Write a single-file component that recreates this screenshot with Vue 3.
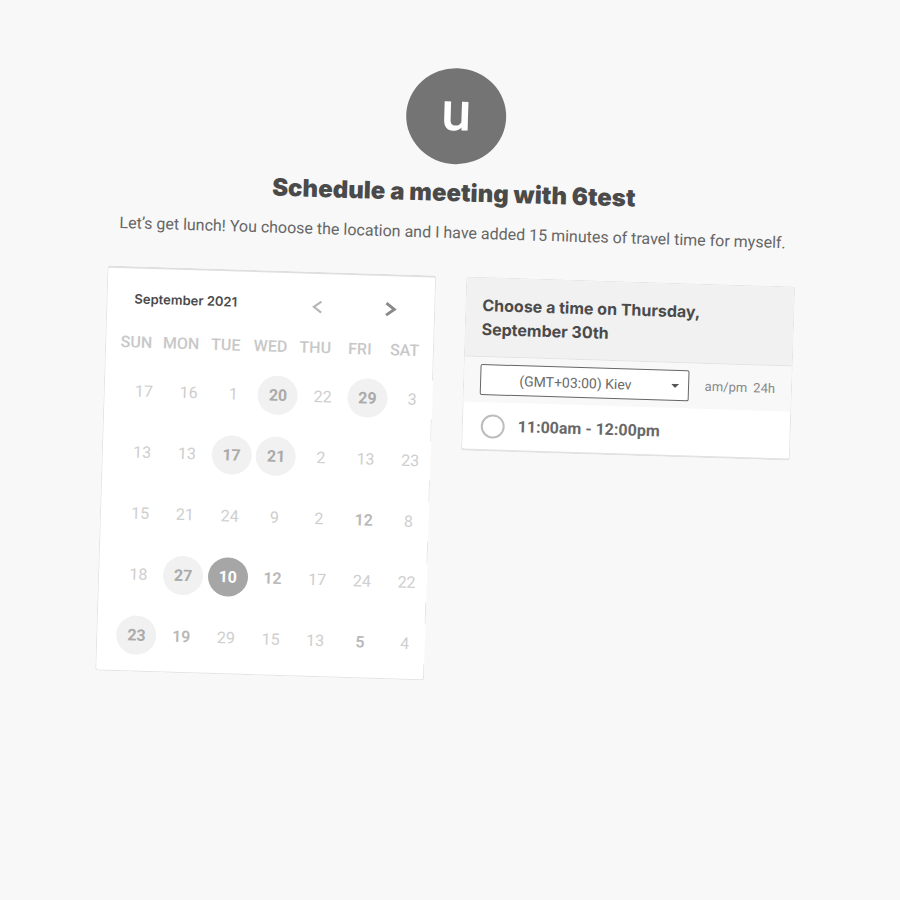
<script setup>
import { ref } from 'vue'

const weekdays = ['SUN', 'MON', 'TUE', 'WED', 'THU', 'FRI', 'SAT']

// state: '' = unavailable, 'strong' = emphasised, 'open' = available, 'selected' = chosen
const weeks = [
  [[17], [16], [1], [20, 'open'], [22], [29, 'open'], [3]],
  [[13], [13], [17, 'open'], [21, 'open'], [2], [13], [23]],
  [[15], [21], [24], [9], [2], [12, 'strong'], [8]],
  [[18], [27, 'open'], [10, 'selected'], [12, 'strong'], [17], [24], [22]],
  [[23, 'open'], [19, 'strong'], [29], [15], [13], [5, 'strong'], [4]],
]

const timezone = ref('kiev')
const slot = ref('')
</script>

<template>
  <main class="page">
    <div class="scheduler">
      <header class="intro">
        <div class="avatar">u</div>
        <h1>Schedule a meeting with 6test</h1>
        <p>Let’s get lunch! You choose the location and I have added 15 minutes of travel time for myself.</p>
      </header>

      <div class="panels">
        <section class="card calendar">
          <div class="month">
            <h2>September 2021</h2>
            <button type="button" class="nav" aria-label="Previous month">
              <svg width="16" height="16" viewBox="0 0 16 16"><path d="M12 2.5 4.5 8l7.5 5.5" /></svg>
            </button>
            <button type="button" class="nav next" aria-label="Next month">
              <svg width="16" height="16" viewBox="0 0 16 16"><path d="M4 2 12 8l-8 6" /></svg>
            </button>
          </div>
          <table>
            <thead>
              <tr>
                <th v-for="d in weekdays" :key="d" scope="col"><span>{{ d }}</span></th>
              </tr>
            </thead>
            <tbody>
              <tr v-for="(week, w) in weeks" :key="w">
                <td v-for="([day, state], i) in week" :key="i">
                  <button type="button" class="day" :class="state">{{ day }}</button>
                </td>
              </tr>
            </tbody>
          </table>
        </section>

        <section class="card times">
          <h2>Choose a time on Thursday, September 30th</h2>
          <div class="zone">
            <div class="picker">
              <select v-model="timezone" aria-label="Time zone">
                <option value="kiev">(GMT+03:00) Kiev</option>
              </select>
              <svg class="caret" width="8" height="4" viewBox="0 0 8 4"><path d="M0 0h8L4 4z" /></svg>
            </div>
            <div class="formats">
              <button type="button">am/pm</button>
              <button type="button">24h</button>
            </div>
          </div>
          <label class="slot">
            <input v-model="slot" type="radio" name="slot" value="11" />
            <span>11:00am - 12:00pm</span>
          </label>
        </section>
      </div>
    </div>
  </main>
</template>

<style>
body {
  background: #f8f8f8;
}
</style>

<style scoped>
.page {
  min-height: 100vh;
  box-sizing: border-box;
  padding: 68px 16px 40px 8px;
  overflow: hidden;
  background: #f8f8f8;
  color: #4a4a4a;
  font-family: Roboto, "Liberation Sans", sans-serif;
}
.scheduler {
  max-width: 688px;
  margin: 0 auto;
  transform: rotate(1.75deg);
  transform-origin: 50% 382px;
}
button,
select,
input {
  font: inherit;
  color: inherit;
  margin: 0;
}
button {
  padding: 0;
  border: 0;
  background: none;
}
h1,
h2,
p {
  margin: 0;
}
.intro {
  display: flex;
  flex-direction: column;
  align-items: center;
  text-align: center;
}
.avatar {
  width: 100px;
  height: 96px;
  border-radius: 50%;
  background: #747474;
  color: #fff;
  font-size: 54px;
  font-weight: 500;
  line-height: 88px;
}
h1 {
  margin-top: 13px;
  font: 900 24px/32px Inter, sans-serif;
}
.intro p {
  margin-top: 12px;
  font-size: 16px;
  line-height: 24px;
  color: #666;
}
.panels {
  display: grid;
  grid-template-columns: minmax(0, 1fr) minmax(0, 1fr);
  align-items: start;
  gap: 30px;
  margin-top: 31px;
}
.card {
  box-sizing: border-box;
  border: 1px solid #e4e4e4;
  border-radius: 3px;
  background: #fff;
}
.calendar {
  border-top: 2px solid #dfdfdf;
  padding: 15px 0 5px 17px;
}
.month {
  display: flex;
  align-items: center;
  height: 36px;
  padding: 0 36px 0 10px;
}
.month h2 {
  flex: 1;
  align-self: flex-start;
  font: 600 13px/30px Inter, sans-serif;
}
.nav {
  display: flex;
  color: #b4b4b4;
}
.next {
  margin-left: 57px;
  color: #8a8a8a;
}
.nav path {
  fill: none;
  stroke: currentColor;
  stroke-width: 2;
}
.next path {
  stroke-width: 3;
}
table {
  width: 313px;
  margin-top: 6px;
  border-collapse: collapse;
  table-layout: fixed;
}
th {
  height: 35px;
  padding: 0 0 2px;
  box-sizing: border-box;
  font-size: 16px;
  font-weight: 500;
  color: #c8c8c8;
  white-space: nowrap;
}
th span {
  margin-left: -18px;
}
td {
  height: 61px;
  padding: 0;
  text-align: center;
}
.day {
  width: 40px;
  height: 39px;
  background: #fff;
  font-size: 16px;
  color: #cecece;
  vertical-align: middle;
}
.strong {
  font-weight: 600;
  color: #b8b8b8;
}
.open {
  border-radius: 50%;
  background: #f1f1f1;
  font-weight: 700;
  color: #aaa;
}
.selected {
  border-radius: 50%;
  background: #a6a6a6;
  font-weight: 700;
  color: #fff;
}
.times h2 {
  padding: 15px 16px;
  border-bottom: 1px solid #e2e2e2;
  background: #f1f1f1;
  font: 700 16px/24px Inter, sans-serif;
}
.zone {
  display: flex;
  align-items: center;
  justify-content: space-between;
  gap: 16px;
  height: 45px;
  padding: 0 16px;
  background: #f8f8f8;
  font-size: 14px;
}
.picker {
  position: relative;
  flex: 1;
}
select {
  display: block;
  width: 100%;
  height: 31px;
  padding: 0 18px 0 0;
  appearance: none;
  border: 1px solid #666;
  border-radius: 2px;
  background: #fff;
  color: #6a6a6a;
  text-align: center;
  text-align-last: center;
}
.caret {
  position: absolute;
  right: 10px;
  top: 14px;
  fill: #555;
  pointer-events: none;
}
.formats {
  display: flex;
  gap: 6px;
  color: #888;
  font-size: 13px;
}
.slot {
  display: flex;
  align-items: center;
  gap: 13px;
  height: 47px;
  padding-left: 18px;
  font-weight: 700;
  font-size: 16px;
  color: #686868;
}
.slot input {
  width: 24px;
  height: 24px;
  appearance: none;
  border: 2px solid #bdbdbd;
  border-radius: 50%;
  background: #fff;
}
.slot input:checked {
  background: #8a8a8a;
}
.times {
  border-bottom: 2px solid #e2e2e2;
}
</style>
